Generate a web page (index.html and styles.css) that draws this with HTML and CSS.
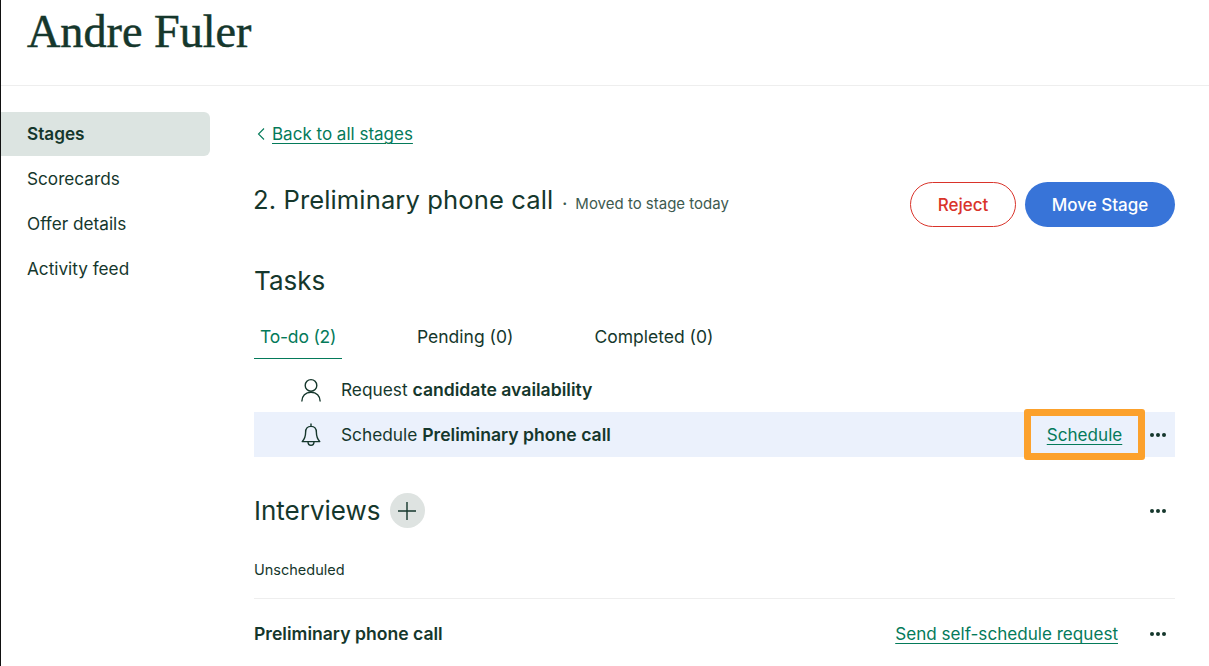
FILE: index.html
```html
<!DOCTYPE html>
<html lang="en">
<head>
<meta charset="utf-8">
<title>Andre Fuler</title>
<link rel="stylesheet" href="styles.css">
</head>
<body>
<div class="page">
  <header class="top">
    <h1>Andre Fuler</h1>
  </header>
  <div class="layout">
    <nav class="side">
      <a class="side-item active">Stages</a>
      <a class="side-item">Scorecards</a>
      <a class="side-item">Offer details</a>
      <a class="side-item">Activity feed</a>
    </nav>
    <main class="main">
      <div class="back">
        <svg class="chev" width="10" height="14" viewBox="0 0 10 14"><path d="M8 1.5 2.5 7 8 12.5" fill="none" stroke="#047a5a" stroke-width="1.1"/></svg>
        <a class="link back-link">Back to all stages</a>
      </div>
      <div class="stage">
        <h2 class="stage-title">2. Preliminary phone call</h2>
        <span class="stage-note"><span class="sep">·</span>Moved to stage today</span>
        <div class="actions">
          <button class="btn reject">Reject</button>
          <button class="btn move">Move Stage</button>
        </div>
      </div>
      <h2 class="section">Tasks</h2>
      <div class="tabs">
        <span class="tab on">To-do (2)</span>
        <span class="tab t2">Pending (0)</span>
        <span class="tab t3">Completed (0)</span>
      </div>
      <div class="task">
        <svg class="task-icon" width="22" height="24" viewBox="0 0 22 24"><g fill="none" stroke="#15372c" stroke-width="1.4"><circle cx="11" cy="7.4" r="5.8"/><path d="M1.8 23.4c0-5.6 3.8-9.2 9.2-9.2s9.2 3.6 9.2 9.2"/></g></svg>
        <span>Request <b>candidate availability</b></span>
      </div>
      <div class="task hl">
        <svg class="task-icon" width="22" height="24" viewBox="0 0 22 24"><g fill="none" stroke="#15372c" stroke-width="1.4" stroke-linejoin="round"><path d="M11 .6v2.8M11 3.4c-3.6 0-5.4 2.7-5.4 6 0 4.4-.9 6.4-3.4 9.2h17.6c-2.5-2.8-3.4-4.8-3.4-9.2 0-3.3-1.8-6-5.4-6Z"/><path d="M8 18.8c0 2.2 1.2 3.5 3 3.5s3-1.3 3-3.5"/></g></svg>
        <span>Schedule <b>Preliminary phone call</b></span>
        <div class="task-end">
          <a class="link sched">Schedule</a>
          <span class="dots"><i></i><i></i><i></i></span>
        </div>
      </div>
      <div class="int-head">
        <h2 class="section inline">Interviews</h2>
        <span class="plus"><svg width="18" height="18" viewBox="0 0 18 18"><path d="M9 0v18M0 9h18" stroke="#15372c" stroke-width="1.4"/></svg></span>
        <span class="dots end"><i></i><i></i><i></i></span>
      </div>
      <div class="unsched">Unscheduled</div>
      <div class="int-row">
        <b>Preliminary phone call</b>
        <a class="link self">Send self-schedule request</a>
        <span class="dots"><i></i><i></i><i></i></span>
      </div>
    </main>
  </div>
</div>
</body>
</html>
```
FILE: styles.css
```css
* { box-sizing: border-box; }
html, body { margin: 0; padding: 0; height: 100%; background: #fff; }
body { font-family: Inter, "Noto Sans", sans-serif; color: #15372c; overflow: hidden; }
.page { border-left: 1px solid #111; height: 666px; overflow: hidden; }
.top { height: 86px; border-bottom: 1px solid #eeeeee; padding-left: 26px; }
h1 { margin: 0; padding-top: 6px; font: 400 46.2px/52px "Liberation Serif", serif; color: #15372c; -webkit-text-stroke: 0.5px #15372c; }
.layout { display: flex; padding-top: 26px; }
.side { width: 209px; flex: none; display: flex; flex-direction: column; }
.side-item { height: 44.8px; padding: 0 0 1px 26px; display: flex; align-items: center; font-size: 17.2px; color: #15372c; }
.side-item.active { height: 44px; margin-bottom: 0.6px; font-weight: 600; background: #dce4e1; border-radius: 0 6px 6px 0; }
.main { margin-left: 44px; width: 921px; flex: none; }
.back { height: 44px; display: flex; align-items: center; gap: 6px; padding-left: 2px; }
.link { color: #047a5a; text-decoration: underline; text-underline-offset: 3px; text-decoration-thickness: 1px; font-size: 17.1px; }
.back-link { font-size: 17px; }
.stage { margin-top: 26px; height: 45px; display: flex; align-items: center; }
.stage-title { margin: 0 0 11px -1px; font-size: 25.6px; font-weight: 400; letter-spacing: 0.1px; }
.stage-note { font-size: 15px; color: #3d5a50; margin-left: 9px; margin-bottom: 3px; }
.sep { margin-right: 8px; font-weight: 700; }
.actions { margin-left: auto; display: flex; gap: 9px; }
.btn { height: 45px; border-radius: 23px; font: 500 17px Inter, sans-serif; }
.reject { width: 106px; background: #fff; border: 1px solid #d9332a; color: #d9332a; }
.move { width: 150px; background: #3874d8; border: none; color: #fff; }
.section { margin: 0; font-size: 26px; font-weight: 400; line-height: 32px; }
.stage + .section { margin-top: 38px; }
.tabs { margin-top: 24px; height: 38px; display: flex; align-items: flex-start; font-size: 17.5px; }
.tab { display: block; height: 38px; line-height: 32px; }
.tab.on { width: 88px; padding-left: 6px; color: #047a5a; border-bottom: 1px solid #047a5a; letter-spacing: -0.2px; }
.t2 { margin-left: 75px; }
.t3 { margin-left: 81px; }
.task { height: 45px; padding-left: 46px; display: flex; align-items: center; font-size: 17.3px; }
.task b { font-weight: 600; font-size: 17.6px; }
.task-icon { flex: none; margin-right: 19px; }
.tabs + .task { margin-top: 8px; }
.hl { background: #ebf1fc; position: relative; }
.task-end { margin-left: auto; display: flex; align-items: center; }
.sched { width: 121px; height: 51px; margin-right: -4px; display: flex; align-items: center; justify-content: center; border: 7px solid #fca12c; border-radius: 3px; }
.dots { display: inline-flex; gap: 2px; width: 34px; justify-content: center; }
.dots i { width: 4px; height: 4px; border-radius: 50%; background: #15372c; }
.int-head { margin-top: 36px; height: 35px; display: flex; align-items: center; }
.section.inline { line-height: 35px; }
.plus { width: 35px; height: 35px; margin-left: 9px; border-radius: 50%; background: #dee3e1; display: flex; align-items: center; justify-content: center; }
.dots.end { margin-left: auto; }
.unsched { margin-top: 25px; height: 46px; font-size: 14.5px; line-height: 24px; border-bottom: 1px solid #eeeeee; padding-top: 5px; }
.int-row { display: flex; align-items: center; height: 69px; font-size: 17.6px; }
.int-row b { font-weight: 600; }
.self { margin-left: auto; margin-right: 23px; }
```
